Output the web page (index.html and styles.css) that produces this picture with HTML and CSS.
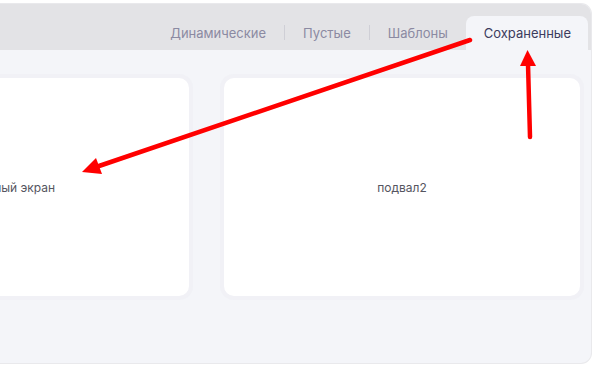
FILE: index.html
```html
<!DOCTYPE html>
<html lang="ru">
<head>
<meta charset="utf-8">
<link rel="stylesheet" href="styles.css">
</head>
<body>
<div class="frame">
  <div class="tabbar">
    <div class="tab">Динамические</div>
    <div class="sep"></div>
    <div class="tab">Пустые</div>
    <div class="sep"></div>
    <div class="tab">Шаблоны</div>
    <div class="tab active">Сохраненные</div>
  </div>
  <div class="content">
    <div class="cards">
      <div class="card">Главный экран</div>
      <div class="card">подвал2</div>
    </div>
  </div>
</div>
<svg class="arrows" width="596" height="366" viewBox="0 0 596 366">
  <line x1="470" y1="40" x2="99" y2="166" stroke="#ff0000" stroke-width="4.5" stroke-linecap="round"/>
  <polygon points="82,172 102,174 96,158" fill="#ff0000"/>
  <line x1="530" y1="137" x2="528" y2="64" stroke="#ff0000" stroke-width="4.5" stroke-linecap="round"/>
  <polygon points="527.5,50 520,66 536,66" fill="#ff0000"/>
</svg>
</body>
</html>
```
FILE: styles.css
```css
html, body {
  margin: 0;
  padding: 0;
  background: #ffffff;
  overflow: hidden;
}
body {
  width: 596px;
  height: 366px;
  position: relative;
  font-family: Inter, "Noto Sans", sans-serif;
}
.frame {
  margin-top: 3px;
  width: 591px;
  height: 359px;
  border: 1px solid #e9e9ec;
  border-left: none;
  border-radius: 0 11px 11px 0;
  overflow: hidden;
  background: #f4f5f9;
  display: flex;
  flex-direction: column;
}
.tabbar {
  height: 46px;
  background: #e3e3e6;
  display: flex;
  justify-content: flex-end;
  align-items: flex-end;
  padding-right: 3px;
  box-sizing: border-box;
}
.tab {
  height: 34px;
  padding: 0 18px;
  display: flex;
  align-items: center;
  font-size: 13px;
  color: #8b8aa2;
}
.sep {
  width: 1px;
  height: 15px;
  background: #cfcfd6;
  align-self: flex-end;
  margin-bottom: 10px;
}
.tab.active {
  background: #f4f5f9;
  color: #3c3c5e;
  border-radius: 8px 8px 0 0;
  padding: 0 17px 0 18px;
}
.content {
  flex: 1;
  padding-top: 28px;
}
.cards {
  display: flex;
  gap: 35px;
  margin-left: -167px;
}
.card {
  width: 356px;
  height: 218px;
  flex: none;
  background: #ffffff;
  border-radius: 10px;
  box-shadow: 0 0 0 4px rgba(230, 232, 240, 0.25);
  display: flex;
  align-items: center;
  justify-content: center;
  font-size: 12px;
  color: #555560;
}
.arrows {
  position: absolute;
  left: 0;
  top: 0;
  pointer-events: none;
}
```
